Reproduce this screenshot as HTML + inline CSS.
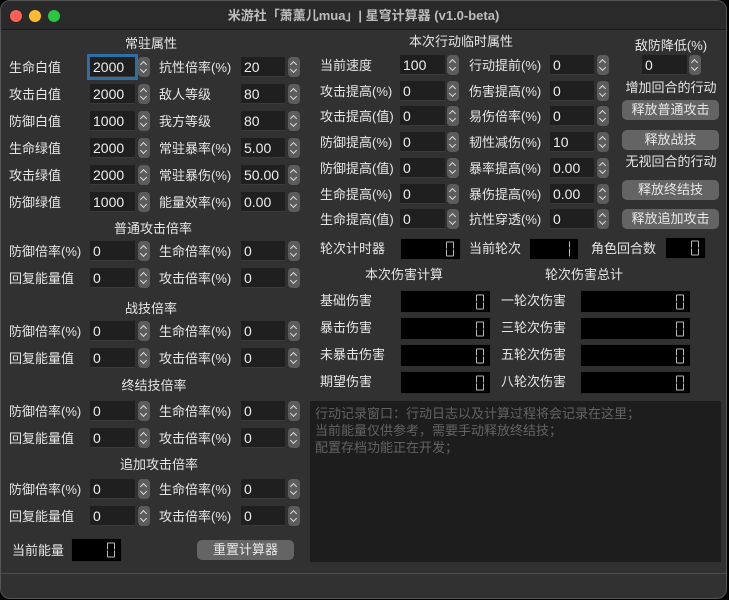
<!DOCTYPE html>
<html><head><meta charset="utf-8"><style>
*{margin:0;padding:0;box-sizing:border-box}
body{width:729px;height:600px;background:#000;font-family:"Liberation Sans","Noto Sans CJK SC",sans-serif;font-size:13px;color:#e6e6e6;overflow:hidden;position:relative}
.win{position:absolute;left:0;top:0;width:727px;height:599px;background:#313131;border-radius:10px;overflow:hidden;border:1px solid #555}
.tb{position:absolute;left:0;top:0;width:100%;height:29px;background:#2a2a2a;border-bottom:1px solid #1a1a1a;text-align:center;line-height:29px;font-size:13px;font-weight:bold;color:#bdbdbd}
.dot{position:absolute;top:9px;width:12px;height:12px;border-radius:50%}
.t{position:absolute;white-space:nowrap;line-height:16px}
.h{position:absolute;white-space:nowrap;line-height:16px;transform:translateX(-50%)}
.i{position:absolute;height:20px;background:#1f1f1f;border-bottom:1px solid #3a3a3a;padding-left:3px;line-height:20px;font-size:14px;color:#eee}
.a{position:absolute;width:12px;height:20px;background:#5c5c5c;border-radius:4px}
.a:before,.a:after{content:"";position:absolute;left:3px;width:4px;height:4px;border-left:1.5px solid #ddd;border-top:1.5px solid #ddd}
.a:before{top:5px;transform:rotate(45deg)}
.a:after{top:10px;transform:rotate(225deg)}
.lcd{position:absolute;background:#000;border:1px solid #2e2e2e}
.lcd span{position:absolute;right:6px;top:50%;transform:translateY(-50%);width:8px;height:15px;border:1px solid #bbb;border-radius:1px}
.lcd span:after{content:"";position:absolute;left:-1px;right:-1px;top:6px;height:1px;background:#000}
.lcd span.one{width:0;border-width:0 0 0 1px;right:8px}
.b{position:absolute;background:#646464;border-radius:5px;height:20px;line-height:20px;text-align:center;color:#e8e8e8;font-size:13px}
.log{position:absolute;left:309px;top:400px;width:411px;height:161px;background:#1d1d1d;color:#636363;padding:4px 5px;line-height:17px;font-size:13px}
</style></head><body><div class="win">
<div class="tb">米游社「萧薰儿mua」| 星穹计算器 (v1.0-beta)</div>
<div class="dot" style="left:9px;background:#fe5f57"></div>
<div class="dot" style="left:28px;background:#febc2e"></div>
<div class="dot" style="left:47px;background:#28c840"></div>

<div class="h" style="left:150px;top:35px">常驻属性</div>
<div class="t" style="left:8px;top:59px">生命白值</div><div class="i" style="left:89px;top:56px;width:45px;outline:3px solid #2f6fa7">2000</div><div class="a" style="left:137px;top:56px"></div>
<div class="t" style="left:158px;top:59px">抗性倍率(%)</div><div class="i" style="left:240px;top:56px;width:44px">20</div><div class="a" style="left:287px;top:56px"></div>
<div class="t" style="left:8px;top:86px">攻击白值</div><div class="i" style="left:89px;top:83px;width:45px">2000</div><div class="a" style="left:137px;top:83px"></div>
<div class="t" style="left:158px;top:86px">敌人等级</div><div class="i" style="left:240px;top:83px;width:44px">80</div><div class="a" style="left:287px;top:83px"></div>
<div class="t" style="left:8px;top:113px">防御白值</div><div class="i" style="left:89px;top:110px;width:45px">1000</div><div class="a" style="left:137px;top:110px"></div>
<div class="t" style="left:158px;top:113px">我方等级</div><div class="i" style="left:240px;top:110px;width:44px">80</div><div class="a" style="left:287px;top:110px"></div>
<div class="t" style="left:8px;top:140px">生命绿值</div><div class="i" style="left:89px;top:137px;width:45px">2000</div><div class="a" style="left:137px;top:137px"></div>
<div class="t" style="left:158px;top:140px">常驻暴率(%)</div><div class="i" style="left:240px;top:137px;width:44px">5.00</div><div class="a" style="left:287px;top:137px"></div>
<div class="t" style="left:8px;top:167px">攻击绿值</div><div class="i" style="left:89px;top:164px;width:45px">2000</div><div class="a" style="left:137px;top:164px"></div>
<div class="t" style="left:158px;top:167px">常驻暴伤(%)</div><div class="i" style="left:240px;top:164px;width:44px">50.00</div><div class="a" style="left:287px;top:164px"></div>
<div class="t" style="left:8px;top:194px">防御绿值</div><div class="i" style="left:89px;top:191px;width:45px">1000</div><div class="a" style="left:137px;top:191px"></div>
<div class="t" style="left:158px;top:194px">能量效率(%)</div><div class="i" style="left:240px;top:191px;width:44px">0.00</div><div class="a" style="left:287px;top:191px"></div>

<div class="h" style="left:152px;top:220px">普通攻击倍率</div>
<div class="t" style="left:8px;top:243px">防御倍率(%)</div><div class="i" style="left:89px;top:240px;width:45px">0</div><div class="a" style="left:137px;top:240px"></div>
<div class="t" style="left:158px;top:243px">生命倍率(%)</div><div class="i" style="left:240px;top:240px;width:44px">0</div><div class="a" style="left:287px;top:240px"></div>
<div class="t" style="left:8px;top:270px">回复能量值</div><div class="i" style="left:89px;top:267px;width:45px">0</div><div class="a" style="left:137px;top:267px"></div>
<div class="t" style="left:158px;top:270px">攻击倍率(%)</div><div class="i" style="left:240px;top:267px;width:44px">0</div><div class="a" style="left:287px;top:267px"></div>

<div class="h" style="left:150px;top:300px">战技倍率</div>
<div class="t" style="left:8px;top:323px">防御倍率(%)</div><div class="i" style="left:89px;top:320px;width:45px">0</div><div class="a" style="left:137px;top:320px"></div>
<div class="t" style="left:158px;top:323px">生命倍率(%)</div><div class="i" style="left:240px;top:320px;width:44px">0</div><div class="a" style="left:287px;top:320px"></div>
<div class="t" style="left:8px;top:350px">回复能量值</div><div class="i" style="left:89px;top:347px;width:45px">0</div><div class="a" style="left:137px;top:347px"></div>
<div class="t" style="left:158px;top:350px">攻击倍率(%)</div><div class="i" style="left:240px;top:347px;width:44px">0</div><div class="a" style="left:287px;top:347px"></div>

<div class="h" style="left:153px;top:377px">终结技倍率</div>
<div class="t" style="left:8px;top:403px">防御倍率(%)</div><div class="i" style="left:89px;top:400px;width:45px">0</div><div class="a" style="left:137px;top:400px"></div>
<div class="t" style="left:158px;top:403px">生命倍率(%)</div><div class="i" style="left:240px;top:400px;width:44px">0</div><div class="a" style="left:287px;top:400px"></div>
<div class="t" style="left:8px;top:430px">回复能量值</div><div class="i" style="left:89px;top:427px;width:45px">0</div><div class="a" style="left:137px;top:427px"></div>
<div class="t" style="left:158px;top:430px">攻击倍率(%)</div><div class="i" style="left:240px;top:427px;width:44px">0</div><div class="a" style="left:287px;top:427px"></div>

<div class="h" style="left:158px;top:456px">追加攻击倍率</div>
<div class="t" style="left:8px;top:481px">防御倍率(%)</div><div class="i" style="left:89px;top:478px;width:45px">0</div><div class="a" style="left:137px;top:478px"></div>
<div class="t" style="left:158px;top:481px">生命倍率(%)</div><div class="i" style="left:240px;top:478px;width:44px">0</div><div class="a" style="left:287px;top:478px"></div>
<div class="t" style="left:8px;top:508px">回复能量值</div><div class="i" style="left:89px;top:505px;width:45px">0</div><div class="a" style="left:137px;top:505px"></div>
<div class="t" style="left:158px;top:508px">攻击倍率(%)</div><div class="i" style="left:240px;top:505px;width:44px">0</div><div class="a" style="left:287px;top:505px"></div>

<div class="t" style="left:11px;top:542px">当前能量</div><div class="lcd" style="left:70px;top:537px;width:51px;height:24px"><span></span></div>
<div class="b" style="left:196px;top:539px;width:97px">重置计算器</div>

<div class="h" style="left:460px;top:33px">本次行动临时属性</div>
<div class="t" style="left:319px;top:57px">当前速度</div><div class="i" style="left:399px;top:54px;width:45px">100</div><div class="a" style="left:446px;top:54px"></div>
<div class="t" style="left:468px;top:57px">行动提前(%)</div><div class="i" style="left:549px;top:54px;width:44px">0</div><div class="a" style="left:596px;top:54px"></div>
<div class="t" style="left:319px;top:83px">攻击提高(%)</div><div class="i" style="left:399px;top:80px;width:45px">0</div><div class="a" style="left:446px;top:80px"></div>
<div class="t" style="left:468px;top:83px">伤害提高(%)</div><div class="i" style="left:549px;top:80px;width:44px">0</div><div class="a" style="left:596px;top:80px"></div>
<div class="t" style="left:319px;top:108px">攻击提高(值)</div><div class="i" style="left:399px;top:105px;width:45px">0</div><div class="a" style="left:446px;top:105px"></div>
<div class="t" style="left:468px;top:108px">易伤倍率(%)</div><div class="i" style="left:549px;top:105px;width:44px">0</div><div class="a" style="left:596px;top:105px"></div>
<div class="t" style="left:319px;top:134px">防御提高(%)</div><div class="i" style="left:399px;top:131px;width:45px">0</div><div class="a" style="left:446px;top:131px"></div>
<div class="t" style="left:468px;top:134px">韧性减伤(%)</div><div class="i" style="left:549px;top:131px;width:44px">10</div><div class="a" style="left:596px;top:131px"></div>
<div class="t" style="left:319px;top:160px">防御提高(值)</div><div class="i" style="left:399px;top:157px;width:45px">0</div><div class="a" style="left:446px;top:157px"></div>
<div class="t" style="left:468px;top:160px">暴率提高(%)</div><div class="i" style="left:549px;top:157px;width:44px">0.00</div><div class="a" style="left:596px;top:157px"></div>
<div class="t" style="left:319px;top:186px">生命提高(%)</div><div class="i" style="left:399px;top:183px;width:45px">0</div><div class="a" style="left:446px;top:183px"></div>
<div class="t" style="left:468px;top:186px">暴伤提高(%)</div><div class="i" style="left:549px;top:183px;width:44px">0.00</div><div class="a" style="left:596px;top:183px"></div>
<div class="t" style="left:319px;top:211px">生命提高(值)</div><div class="i" style="left:399px;top:208px;width:45px">0</div><div class="a" style="left:446px;top:208px"></div>
<div class="t" style="left:468px;top:211px">抗性穿透(%)</div><div class="i" style="left:549px;top:208px;width:44px">0</div><div class="a" style="left:596px;top:208px"></div>

<div class="h" style="left:670px;top:37px">敌防降低(%)</div>
<div class="i" style="left:641px;top:54px;width:45px">0</div><div class="a" style="left:688px;top:54px"></div>
<div class="h" style="left:670px;top:79px">增加回合的行动</div>
<div class="b" style="left:621px;top:99px;width:97px">释放普通攻击</div>
<div class="b" style="left:621px;top:129px;width:97px">释放战技</div>
<div class="h" style="left:670px;top:153px">无视回合的行动</div>
<div class="b" style="left:621px;top:179px;width:97px">释放终结技</div>
<div class="b" style="left:621px;top:208px;width:97px">释放追加攻击</div>

<div class="t" style="left:319px;top:240px">轮次计时器</div><div class="lcd" style="left:399px;top:237px;width:61px;height:22px"><span></span></div>
<div class="t" style="left:468px;top:240px">当前轮次</div><div class="lcd" style="left:528px;top:237px;width:50px;height:22px"><span class="one"></span></div>
<div class="t" style="left:590px;top:240px">角色回合数</div><div class="lcd" style="left:664px;top:236px;width:41px;height:22px"><span></span></div>

<div class="h" style="left:403px;top:266px">本次伤害计算</div>
<div class="h" style="left:583px;top:266px">轮次伤害总计</div>
<div class="t" style="left:319px;top:292px">基础伤害</div><div class="lcd" style="left:399px;top:289px;width:91px;height:23px"><span></span></div>
<div class="t" style="left:500px;top:292px">一轮次伤害</div><div class="lcd" style="left:579px;top:289px;width:111px;height:23px"><span></span></div>
<div class="t" style="left:319px;top:319px">暴击伤害</div><div class="lcd" style="left:399px;top:316px;width:91px;height:23px"><span></span></div>
<div class="t" style="left:500px;top:319px">三轮次伤害</div><div class="lcd" style="left:579px;top:316px;width:111px;height:23px"><span></span></div>
<div class="t" style="left:319px;top:346px">未暴击伤害</div><div class="lcd" style="left:399px;top:343px;width:91px;height:23px"><span></span></div>
<div class="t" style="left:500px;top:346px">五轮次伤害</div><div class="lcd" style="left:579px;top:343px;width:111px;height:23px"><span></span></div>
<div class="t" style="left:319px;top:373px">期望伤害</div><div class="lcd" style="left:399px;top:370px;width:91px;height:23px"><span></span></div>
<div class="t" style="left:500px;top:373px">八轮次伤害</div><div class="lcd" style="left:579px;top:370px;width:111px;height:23px"><span></span></div>

<div class="log">行动记录窗口：行动日志以及计算过程将会记录在这里；<br>当前能量仅供参考，需要手动释放终结技；<br>配置存档功能正在开发；</div>
<div style="position:absolute;left:0;top:572px;width:100%;height:1px;background:#4a4a4a"></div>
</div></body></html>
